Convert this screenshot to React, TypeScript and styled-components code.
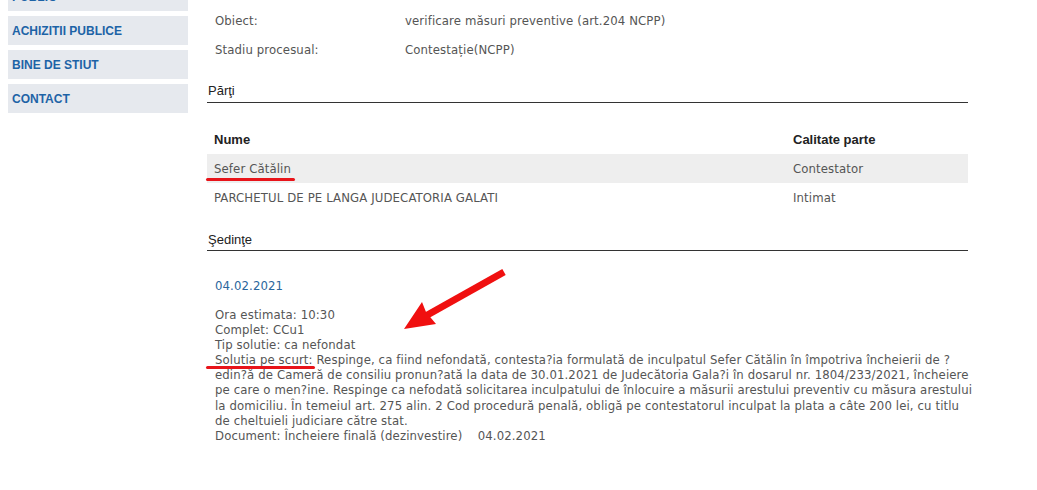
import styled, { createGlobalStyle } from "styled-components"

const GlobalStyle = createGlobalStyle`
    html, body { margin: 0; padding: 0; background: #fff; }
    body { font-family: "DejaVu Sans Condensed", Tahoma, sans-serif; font-size: 13px; color: #555; overflow: hidden; }
`

const Page = styled.div`
    display: flex;
    align-items: flex-start;
    gap: 19px;
    padding-left: 8px;
    width: 1037px;
    height: 490px;
    overflow: hidden;
    position: relative;
`

const Sidebar = styled.nav`
    width: 180px;
    display: flex;
    flex-direction: column;
    gap: 5px;
    margin-top: -18px;
`

const NavItem = styled.a`
    display: flex;
    align-items: center;
    height: 29px;
    padding-left: 4px;
    background: #e6e9ee;
    color: #1d63a6;
    font-family: "Liberation Sans", Arial, sans-serif;
    font-weight: bold;
    font-size: 12px;
    text-decoration: none;
`

const Content = styled.main`
    width: 761px;
    padding-top: 6px;
    display: flex;
    flex-direction: column;
    letter-spacing: 0.12px;
`

const InfoRow = styled.div`
    display: grid;
    grid-template-columns: 190px 1fr;
    align-items: center;
    height: 29px;
    padding-left: 8px;
`

const SectionTitle = styled.h3<{ gapTop: number; gapBottom: number }>`
    margin: ${({ gapTop }) => gapTop}px 0 0;
    padding: 0 0 ${({ gapBottom }) => gapBottom}px 1px;
    font-family: "Liberation Sans", Arial, sans-serif;
    font-weight: normal;
    font-size: 13px;
    line-height: 16px;
    letter-spacing: 0;
    color: #222;
    border-bottom: 1px solid #333;
`

const Table = styled.div`
    margin-top: 22px;
    display: flex;
    flex-direction: column;
`

const TableRow = styled.div<{ shaded?: boolean; head?: boolean }>`
    display: grid;
    grid-template-columns: 579px 1fr;
    align-items: center;
    height: 29px;
    padding-left: 7px;
    background: ${({ shaded }) => shaded ? '#eeeeee' : 'transparent'};
    ${({ head }) => head && `
        font-family: "Liberation Sans", Arial, sans-serif;
        font-weight: bold;
        letter-spacing: 0;
        color: #222;
    `}
`

const Marked = styled.span<{ left: number; right: number; below: number }>`
    position: relative;
    &::after {
        content: "";
        position: absolute;
        left: ${({ left }) => left}px;
        right: ${({ right }) => right}px;
        bottom: ${({ below }) => below}px;
        height: 3px;
        border-radius: 2px;
        background: #e8141a;
    }
`

const Hearing = styled.div`
    padding-left: 8px;
    margin-top: 27px;
    display: flex;
    flex-direction: column;
`

const HearingDate = styled.div`
    color: #2b669c;
    line-height: 15px;
    margin-bottom: 14px;
`

const Line = styled.div`
    line-height: 15.1px;
    white-space: nowrap;
`

const Arrow = styled.svg`
    position: absolute;
    left: 400px;
    top: 266px;
`

const navItems = ['PUBLIC', 'ACHIZITII PUBLICE', 'BINE DE STIUT', 'CONTACT']

export default function App() {
    return (
        <>
            <GlobalStyle />
            <Page>
                <Sidebar>
                    {navItems.map((item) => <NavItem key={item} href="#">{item}</NavItem>)}
                </Sidebar>
                <Content>
                    <InfoRow>
                        <span>Obiect:</span>
                        <span>verificare măsuri preventive (art.204 NCPP)</span>
                    </InfoRow>
                    <InfoRow>
                        <span>Stadiu procesual:</span>
                        <span>Contestație(NCPP)</span>
                    </InfoRow>

                    <SectionTitle gapTop={19} gapBottom={3}>Părţi</SectionTitle>
                    <Table>
                        <TableRow head>
                            <span>Nume</span>
                            <span>Calitate parte</span>
                        </TableRow>
                        <TableRow shaded>
                            <span><Marked left={-8} right={-4} below={-5}>Sefer Cătălin</Marked></span>
                            <span>Contestator</span>
                        </TableRow>
                        <TableRow>
                            <span>PARCHETUL DE PE LANGA JUDECATORIA GALATI</span>
                            <span>Intimat</span>
                        </TableRow>
                    </Table>

                    <SectionTitle gapTop={20} gapBottom={2}>Şedinţe</SectionTitle>
                    <Hearing>
                        <HearingDate>04.02.2021</HearingDate>
                        <Line>Ora estimata: 10:30</Line>
                        <Line>Complet: CCu1</Line>
                        <Line>Tip solutie: ca nefondat</Line>
                        <Line><Marked left={-9} right={-2} below={-2}>Solutia pe scurt:</Marked> Respinge, ca fiind nefondată, contesta?ia formulată de inculpatul Sefer Cătălin în împotriva încheierii de ?</Line>
                        <Line>edin?ă de Cameră de consiliu pronun?ată la data de 30.01.2021 de Judecătoria Gala?i în dosarul nr. 1804/233/2021, încheiere</Line>
                        <Line>pe care o men?ine. Respinge ca nefodată solicitarea inculpatului de înlocuire a măsurii arestului preventiv cu măsura arestului</Line>
                        <Line>la domiciliu. În temeiul art. 275 alin. 2 Cod procedură penală, obligă pe contestatorul inculpat la plata a câte 200 lei, cu titlu</Line>
                        <Line>de cheltuieli judiciare către stat.</Line>
                        <Line>Document: Încheiere finală (dezinvestire) &nbsp;&nbsp; 04.02.2021</Line>
                    </Hearing>
                </Content>
                <Arrow width="110" height="70" viewBox="0 0 110 70">
                    <line x1="104" y1="6" x2="22" y2="52" stroke="#f01010" strokeWidth="7" />
                    <path d="M4 63 L22 36 L26 46 L36 58 Z" fill="#f01010" />
                </Arrow>
            </Page>
        </>
    )
}
